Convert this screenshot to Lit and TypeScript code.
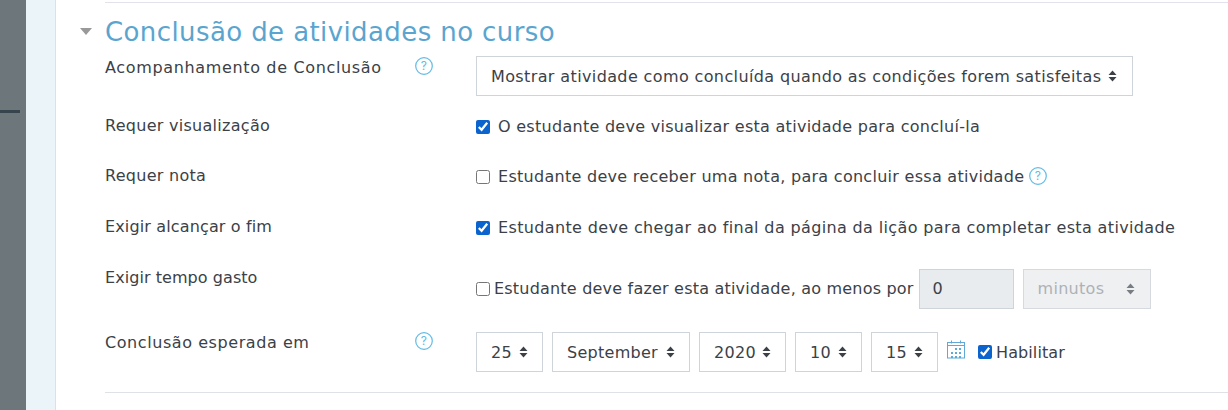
import { LitElement, html, css, svg } from "lit";
import { customElement } from "lit/decorators.js";

const caret = html`<svg class="caret" width="9" height="12" viewBox="0 0 9 12"><path d="M4.5 0.5 L8.5 5 H0.5 Z M0.5 7 H8.5 L4.5 11.500 Z" fill="currentColor"/></svg>`;
const help = html`<svg class="help" width="18" height="18" viewBox="0 0 18 18"><circle cx="9" cy="9" r="8.3" fill="none" stroke="#62bbe6" stroke-width="1.2"/><text x="9" y="13.2" text-anchor="middle" font-size="12" font-family="Inter, sans-serif" fill="#62bbe6">?</text></svg>`;
const calendar = html`<svg class="cal" width="18" height="19" viewBox="0 0 18 19" fill="none" stroke="#5ea9d6" stroke-width="1">
  <rect x="0.5" y="2.5" width="17" height="15.5"/><path d="M0.5 5.5H17.5M4.5 0.5V3.5M13.5 0.5V3.5"/>
  ${[4, 8, 12].flatMap((y) => [4, 8, 12].filter((x) => !(y === 4 && x === 4)).map((x) => svg`<rect x="${x}" y="${y + 4}" width="2" height="2" fill="#5ea9d6" stroke="none"/>`))}
</svg>`;

@customElement("app-root")
export class AppRoot extends LitElement {
  static styles = css`
    :host { display: block; width: 1228px; height: 410px; overflow: hidden; background: #fff; font-family: "DejaVu Sans", Inter, sans-serif; font-size: 16px; letter-spacing: 0.28px; color: #3b4147; }
    .page { display: flex; height: 410px; }
    .side { width: 26px; background: #6d767b; padding-top: 110px; box-sizing: border-box; flex: none; }
    .side .bar { width: 20px; height: 3px; background: #37444d; }
    .pale { width: 29px; background: #ebf4f8; border-right: 1px solid #d9e3e7; flex: none; }
    .main { flex: 1; padding: 2px 0 0 49px; min-width: 0; }
    .rule { height: 1px; background: #dee2e6; }
    .top { background: #e2e2ec; }
    .head { display: flex; align-items: center; height: 40px; margin: 9px 0 4px; position: relative; }
    .tri { position: absolute; left: -25px; top: 16px; width: 0; height: 0; border-left: 6.5px solid transparent; border-right: 6.5px solid transparent; border-top: 7px solid #999; }
    h3 { margin: 0; font-weight: 400; font-size: 26px; letter-spacing: 0.4px; color: #5aa5cf; line-height: 40px; }
    .row { display: grid; grid-template-columns: 310px 61px 1fr; }
    .lbl { line-height: 22px; padding-top: 1px; }
    .hi { display: flex; padding-top: 1px; }
    .ctl { display: flex; align-items: center; gap: 9px; white-space: nowrap; }
    .r1 { height: 40px; }
    .r2 { height: 22px; margin-top: 18px; }
    .r3 { height: 22px; margin-top: 28px; }
    .r4 { height: 22px; margin-top: 29px; }
    .r5 { height: 43px; margin-top: 29px; }
    .r6 { height: 41px; margin-top: 22px; }
    .r5 .ctl { padding-top: 2px; }
    .r6 .ctl { padding-top: 1px; }
    .r2 .ctl, .r3 .ctl, .r4 .ctl { position: relative; top: 1px; }
    .help { display: block; }
    .sel { box-sizing: border-box; height: 40px; border: 1px solid #ced4da; display: flex; align-items: center; justify-content: space-between; padding: 0 14px; flex: none; }
    .sel .caret { color: #3b4147; flex: none; }
    .w-main { width: 657px; padding-right: 15px; letter-spacing: 0.38px; }
    .w25 { width: 67px; } .wsep { width: 138px; } .wyr { width: 87px; } .w10 { width: 67px; }
    .wmin { width: 128px; background: #eff0f2; border-color: #d6dade; color: #adb2b7; padding-right: 15px; }
    .wmin .caret { color: #777d83; }
    .inp { box-sizing: border-box; width: 95px; height: 40px; margin-left: -4px; border: 1px solid #ced4da; background: #e9ecef; display: flex; align-items: center; padding-left: 13px; flex: none; }
    input[type="checkbox"] { width: 14px; height: 14px; margin: 0; flex: none; accent-color: #0b63ce; }
    .chk { display: flex; align-items: center; gap: 8px; }
    .chk.tight { gap: 4px; }
    .ilhelp { margin-left: -4px; margin-top: -2px; }
    .hab { margin-left: 4px; letter-spacing: 0.1px; }
    .cal { margin-top: -5px; flex: none; }
    .bottom { margin-top: 20px; }
    .ls-wide { letter-spacing: 0.65px; }
    .ls-mid { letter-spacing: 0.57px; }
    .ls-narrow { letter-spacing: 0.14px; }
    .ls-tight { letter-spacing: 0.06px; }
    .ls-long { letter-spacing: 0.36px; }
    .ls-for { letter-spacing: 0.2px; }
  `;

  render() {
    const sel = (cls: string, t: string) => html`<div class="sel ${cls}"><span>${t}</span>${caret}</div>`;
    return html`<div class="page">
      <div class="side"><div class="bar"></div></div>
      <div class="pale"></div>
      <main class="main">
        <div class="rule top"></div>
        <div class="head"><span class="tri"></span><h3>Conclusão de atividades no curso</h3></div>
        <div class="row r1">
          <div class="lbl ls-wide">Acompanhamento de Conclusão</div><div class="hi">${help}</div>
          <div class="ctl">${sel("w-main", "Mostrar atividade como concluída quando as condições forem satisfeitas")}</div>
        </div>
        <div class="row r2"><div class="lbl">Requer visualização</div><div></div>
          <div class="ctl"><label class="chk"><input type="checkbox" checked />O estudante deve visualizar esta atividade para concluí-la</label></div>
        </div>
        <div class="row r3"><div class="lbl">Requer nota</div><div></div>
          <div class="ctl"><label class="chk"><input type="checkbox" />Estudante deve receber uma nota, para concluir essa atividade</label><span class="ilhelp">${help}</span></div>
        </div>
        <div class="row r4"><div class="lbl ls-narrow">Exigir alcançar o fim</div><div></div>
          <div class="ctl"><label class="chk ls-long"><input type="checkbox" checked />Estudante deve chegar ao final da página da lição para completar esta atividade</label></div>
        </div>
        <div class="row r5"><div class="lbl ls-tight">Exigir tempo gasto</div><div></div>
          <div class="ctl"><label class="chk tight ls-for"><input type="checkbox" />Estudante deve fazer esta atividade, ao menos por</label><div class="inp">0</div>${sel("wmin", "minutos")}</div>
        </div>
        <div class="row r6"><div class="lbl ls-mid">Conclusão esperada em</div><div class="hi">${help}</div>
          <div class="ctl">${sel("w25", "25")}${sel("wsep", "September")}${sel("wyr", "2020")}${sel("w10", "10")}${sel("w10", "15")}${calendar}
            <label class="chk tight hab"><input type="checkbox" checked />Habilitar</label></div>
        </div>
        <div class="rule bottom"></div>
      </main>
    </div>`;
  }
}
